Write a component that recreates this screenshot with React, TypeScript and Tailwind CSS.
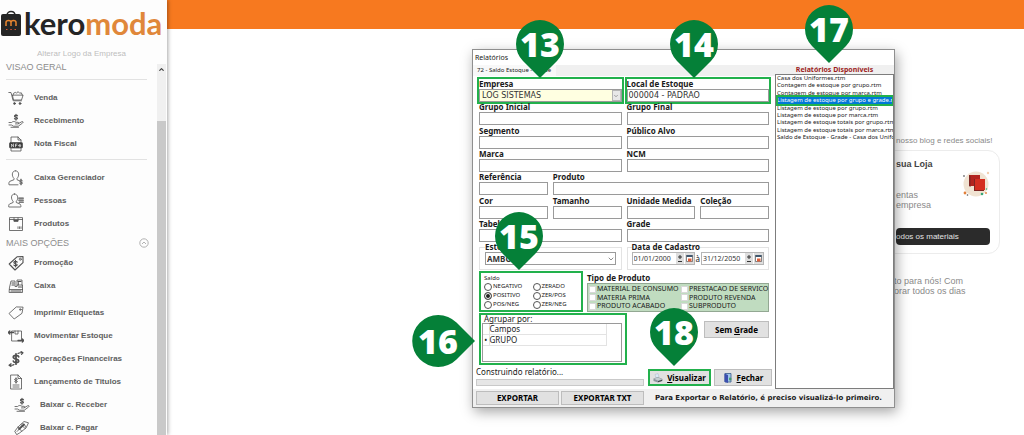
import type { ReactNode } from 'react';
import { ChevronDown, ChevronUp } from 'lucide-react';

const reports = [
  'Casa dos Uniformes.rtm',
  'Contagem de estoque por grupo.rtm',
  'Contagem de estoque por marca.rtm',
  'Listagem de estoque por grupo e grade.rtm',
  'Listagem de estoque por grupo.rtm',
  'Listagem de estoque por marca.rtm',
  'Listagem de estoque totais por grupo.rtm',
  'Listagem de estoque totais por marca.rtm',
  'Saldo de Estoque - Grade - Casa dos Uniformes.rtm',
];

const balances = ['NEGATIVO', 'ZERADO', 'POSITIVO', 'ZER/POS', 'POS/NEG', 'ZER/NEG'];

const productTypes = [
  'MATERIAL DE CONSUMO',
  'PRESTACAO DE SERVICO',
  'MATERIA PRIMA',
  'PRODUTO REVENDA',
  'PRODUTO ACABADO',
  'SUBPRODUTO',
];

function Icon({ children }: { children: ReactNode }) {
  return (
    <svg
      viewBox="0 0 16 16"
      className="w-4 h-4 shrink-0"
      fill="none"
      stroke="#505050"
      strokeWidth="0.8"
      strokeLinecap="round"
      strokeLinejoin="round"
    >
      {children}
    </svg>
  );
}

function Dollar({ x = 8, y = 8, s = 1 }: { x?: number; y?: number; s?: number }) {
  return (
    <path
      transform={`translate(${x} ${y}) scale(${s})`}
      d="M2-1.6C1.6-3-2-3-2-1.3S2-.2 2 1.4-1.7 3-2 1.6M0-3.8v7.6"
      strokeWidth="1.3"
    />
  );
}

function Hand() {
  return (
    <path d="M1 9.5h2.5c1.500-1.400 3-1.200 4.500-.2h2c1.200 0 1 1.600-.2 1.600H7.500M10.500 10.600l3.300-1.900c1.200-.5 1.800.6.8 1.300l-4.300 3.200H5.500L3.500 12H1M3 14.300h7.500" />
  );
}

const icons: Record<string, ReactNode> = {
  cart: (
    <>
      <path d="M.8 2.500h2.200l2.200 8.300h8.300M4.500 5.500 5.500 10h8l1.500-4.500ZM5 5.300l.5-2 2-1 1 1 1.500-1.700 1.600 1.600 1.700-.4 1 2.300" />
      <circle cx="6.500" cy="13.500" r="0.900" fill="#505050" />
      <circle cx="12" cy="13.500" r="0.900" fill="#505050" />
    </>
  ),
  hand: (
    <>
      <Dollar x={8} y={4.200} s={0.8} />
      <Hand />
    </>
  ),
  nfe: (
    <>
      <path d="M3 6V1h7l3 3v2M10 1v3h3M3 12.500V15h10v-2.500" />
      <rect x="1.500" y="6.500" width="13" height="5.500" rx="1" fill="#3b3b3b" />
      <path d="M3.500 10.800V8l2 2.800V8M7.500 10.800V8h1.500M7.500 9.300h1.300M10.800 9.500h2c0-1.500-2-1.400-2 .2 0 1.200 1.400 1.400 2 .7" stroke="#fff" strokeWidth="0.6" />
    </>
  ),
  manager: (
    <>
      <path d="M7.500.8c-4.200 0-3.800 5.600-1.500 7.600v1.300L1.700 11.400c-.9.600-1 3.100-.7 3.400h9M7.500.8c4.200 0 3.800 5.600 1.500 7.600v1.300l2 .9" />
      <Dollar x={13} y={12} s={0.75} />
    </>
  ),
  people: (
    <>
      <path d="M6.500 1c-4 0-3.600 5.300-1.400 7.200v1.300L1.500 11c-.9.600-1 2.700-.7 3h12c.3-.3 0-2.400-.8-3L8.300 9.500V8.200C10.500 6.300 10.500 1 6.500 1Z" />
      <path d="M10.800 5.200h4.500M10.800 7.200h4.500M11.300 9.200h4" strokeWidth="1.200" />
    </>
  ),
  box: (
    <>
      <path d="M1.500 2v12.500h13V2ZM1.500 3.500h13M6 2v3.300h4V2" />
      <path d="M6.300 4.800h3.400" strokeWidth="1.400" />
      <path d="M10 12.500V10.800M11.500 12.500V10.800M13 12.500V10.800" />
    </>
  ),
  promo: (
    <>
      <path d="M15 1.500v6.200L7 15 1.200 9 9 1.800Z" strokeWidth="1.100" />
      <circle cx="12.300" cy="4.200" r="1" />
      <Dollar x={7.500} y={8.600} s={0.85} />
    </>
  ),
  register: (
    <>
      <path d="M1.500 9.500 3 3h4v5.500h2V7h5.500v7.500h-13ZM1.500 11.500h13M9 7V2h5v5M10.500 7V4.500" />
      <path d="M4 5h2M4 7h2M10 3.500h3M3 13h10M10.500 9h3" strokeWidth="1.200" />
    </>
  ),
  tag: (
    <>
      <path d="M15 2.500 14 8.300 6.200 14 1 8.500 8 2.200Z" />
      <circle cx="12.300" cy="4.500" r="0.800" />
    </>
  ),
  move: (
    <>
      <path d="M4 3h9.500v10H4ZM7 3v3h3V3" />
      <path d="M5.500 4.500H0M1.800 3 .2 4.500 1.800 6M10 12.500h6M14.300 11l1.500 1.500-1.500 1.500" strokeWidth="1.300" />
    </>
  ),
  exchange: (
    <>
      <Dollar x={8} y={8} s={1.35} />
      <path d="M10 2.500c1.500-1.300 3-.7 4.500-.7M13 .5l2 1.300-1.500 1.600M6 13.500c-1.500 1.300-3 .7-4.500.7M3 12.700l-2 1.500 2 1.300" strokeWidth="1.100" />
    </>
  ),
  document: (
    <>
      <path d="M3 1h7l3.500 3.500V15H3ZM10 1v3.500h3.500M5 11h6M5 13h6" />
      <Dollar x={8} y={6.500} s={0.7} />
    </>
  ),
  pay: (
    <>
      <path d="m1 11 3-4 6-5.500 4.500 1.300L12 8l-6.500 5L3 14.500ZM4 7l3.500 4M7 4.500l4 4M3 11.500l6-6M8 3.700c2 0 3.500 1.400 3.500 3.300" />
      <path d="m5 9 5-4.500" strokeWidth="1.800" />
    </>
  ),
};

interface MenuItemProps {
  icon: string;
  label: string;
  nested?: boolean;
}

function MenuItem({ icon, label, nested }: MenuItemProps) {
  return (
    <li>
      <a href="#" className={`flex items-center h-[23px] gap-[10px] ${nested ? 'pl-[14px]' : 'pl-2'}`}>
        <Icon>{icons[icon]}</Icon>
        <span className="font-bold whitespace-nowrap text-[#606060]">{label}</span>
      </a>
    </li>
  );
}

function Sidebar() {
  return (
    <aside className="relative z-10 w-[167px] shrink-0 h-full flex flex-col bg-[#fdfdfd] shadow-[1px_0_4px_rgba(0,0,0,0.35)]">
      <div className="flex items-center h-[45px] pl-px">
        <svg viewBox="0 0 20 26" className="w-5 h-[26px] shrink-0">
          <path d="M6 5.500C6 .2 14 .2 14 5.500" fill="none" stroke="#252525" strokeWidth="1.500" />
          <rect y="4" width="20" height="22" rx="2" fill="#252525" />
          <path d="M5 16v-3.500c0-2.700 5-2.700 5 0V16v-3.500c0-2.700 5-2.700 5 0V16" fill="none" stroke="#e8852f" strokeWidth="1.500" />
          <path d="M5 19.500h1.500M9.300 19.500h1.500M13.500 19.500H15" stroke="#d9542f" />
        </svg>
        <span className="pl-[3px] font-['Lato'] font-bold text-[31px] leading-10 text-[#252525]">
          kero<span className="text-[#e0873a]">moda</span>
        </span>
      </div>
      <p className="h-[19px] pr-1 text-center text-[8px] leading-[18px] text-[#bdbdbd]">Alterar Logo da Empresa</p>
      <div className="flex flex-1 min-h-0">
        <nav className="flex-1 overflow-hidden text-[8px]">
          <h2 className="-mt-[2px] pl-[6px] text-[9px] leading-[10px] text-[#8c8c8c]">VISÃO GERAL</h2>
          <hr className="mt-[7px] ml-[6px] mr-[10px] mb-[6px] border-[#e2e2e2]" />
          <ul>
            <MenuItem icon="cart" label="Venda" />
            <MenuItem icon="hand" label="Recebimento" />
            <MenuItem icon="nfe" label="Nota Fiscal" />
          </ul>
          <hr className="mt-1 ml-[6px] mr-[10px] mb-[6px] border-[#e2e2e2]" />
          <ul>
            <MenuItem icon="manager" label="Caixa Gerenciador" />
            <MenuItem icon="people" label="Pessoas" />
            <MenuItem icon="box" label="Produtos" />
          </ul>
          <div className="flex items-center justify-between h-4 pl-[6px] pr-2">
            <h2 className="text-[9px] leading-4 text-[#8c8c8c]">MAIS OPÇÕES</h2>
            <svg viewBox="0 0 10 10" className="w-[10px] h-[10px]" fill="none" stroke="#a0a0a0" strokeWidth="0.8">
              <circle cx="5" cy="5" r="4.200" />
              <path d="m3 6 2-2 2 2" />
            </svg>
          </div>
          <ul>
            <MenuItem icon="promo" label="Promoção" />
            <MenuItem icon="register" label="Caixa" />
          </ul>
          <ul className="mt-1">
            <MenuItem icon="tag" label="Imprimir Etiquetas" />
            <MenuItem icon="move" label="Movimentar Estoque" />
            <MenuItem icon="exchange" label="Operações Financeiras" />
            <MenuItem icon="document" label="Lançamento de Titulos" />
            <MenuItem icon="hand" label="Baixar c. Receber" nested />
            <MenuItem icon="pay" label="Baixar c. Pagar" nested />
          </ul>
        </nav>
        <div className="w-[9px] mr-px flex flex-col bg-[#f0f0f0]">
          <div className="h-[57px] flex justify-center pt-[2px]">
            <ChevronUp size={7} color="#404040" strokeWidth={4} />
          </div>
          <div className="flex-1 bg-[#c9c9c9]" />
        </div>
      </div>
    </aside>
  );
}

function Promotions() {
  return (
    <section className="ml-auto w-[180px] pt-[107px] text-[9px] leading-[10px] text-[#8a8a8a]">
      <p className="pl-[52px] text-[8px] whitespace-nowrap">nosso blog e redes sociais!</p>
      <div className="mt-1 mr-6 h-[104px] rounded-xl border border-[#ececec] pl-[51px] pr-[9px]">
        <div className="flex justify-between">
          <div className="pt-2 whitespace-nowrap">
            <h3 className="font-bold text-[#444444]">sua Loja</h3>
            <p className="mt-[21px]">entas</p>
            <p>empresa</p>
          </div>
          <svg viewBox="0 0 28 28" className="w-7 h-7 mt-[18px]">
            <circle cx="14" cy="15" r="12.500" fill="#f0e3d2" />
            <path d="M7 6h11v11H7Z" fill="#b3231e" />
            <path d="M7 6v11l1.500 1V7M12 10h10v12H12Z" fill="#7e2522" />
            <path d="M13 10h10v11H13Z" fill="#d42e20" />
            <circle cx="2" cy="7" r="0.900" fill="#777" />
            <circle cx="26" cy="4" r="1.200" fill="#f3cfb0" />
            <circle cx="3" cy="24" r="1.400" fill="#e2803a" />
            <circle cx="5.500" cy="26" r="0.800" fill="#555" />
            <circle cx="20" cy="25" r="1.300" fill="#37a878" />
            <circle cx="24" cy="24" r="0.900" fill="#e2803a" />
            <circle cx="24.500" cy="20" r="0.800" fill="#37a878" />
          </svg>
        </div>
        <button type="button" className="block w-full h-[17px] mt-[18px] rounded-sm bg-[#2b2b2b] text-left text-[8px] text-[#e4e4e4] whitespace-nowrap">
          odos os materiais
        </button>
      </div>
      <p className="mt-[22px] pl-[50px] whitespace-nowrap">to para nós! Com</p>
      <p className="pl-[50px] whitespace-nowrap">orar todos os dias</p>
    </section>
  );
}

interface FieldProps {
  id: string;
  label: string;
  wide?: 2 | 3;
  value?: string;
  marked?: boolean;
}

function Field({ id, label, wide, value, marked }: FieldProps) {
  const span = wide === 3 ? 'col-span-3' : wide === 2 ? 'col-span-2' : '';
  return (
    <div className={`flex flex-col ${span} ${marked ? 'outline-2 outline-[#22b14c]' : ''}`}>
      <label htmlFor={id} className="h-[10px] font-bold text-[8px] leading-[10px] whitespace-nowrap">
        {label}
      </label>
      <input
        id={id}
        defaultValue={value}
        className="w-full min-w-0 h-[13px] border border-[#9a9a9a] bg-white px-px text-[8px] font-['DejaVu_Sans'] text-[#333333]"
      />
    </div>
  );
}

function DateField({ label, value }: { label: string; value: string }) {
  return (
    <div className="flex items-center flex-1 min-w-0 h-[13px] border border-[#b5b5b5]">
      <input aria-label={label} defaultValue={value} className="flex-1 min-w-0 pl-px text-[7px] text-[#333333]" />
      <svg viewBox="0 0 18 11" className="w-[18px] h-[11px] shrink-0">
        <path d="M0 0h8v11H0ZM9 0h9v11H9Z" fill="#dedede" />
        <path d="M2 4h4M4 2v4M2 8.500h4" stroke="#333" />
        <path d="M10.500 2.500h6v6h-6Z" fill="#fff" stroke="#555" strokeWidth="0.700" />
        <path d="M10.500 2h6v2h-6Z" fill="#40586f" />
        <path d="M12 5.500h3.500v3H12Z" fill="#e0603a" />
      </svg>
    </div>
  );
}

const button =
  'flex items-center justify-center gap-1 border border-[#bdbdbd] bg-[#e1e1e1] font-bold text-[8px] leading-[10px] whitespace-nowrap text-black font-[\'DejaVu_Sans_Condensed\',\'DejaVu_Sans\']';

function ReportDialog() {
  return (
    <div
      role="dialog"
      aria-label="Relatórios"
      className="absolute z-20 left-[472px] top-[49px] w-[423px] border border-[#8f8f8f] bg-[#f0f0f0] text-[#1a1a1a] font-['Noto_Sans',sans-serif] shadow-[2px_4px_12px_rgba(0,0,0,0.35)]"
    >
      <div className="h-[15px] pl-[2px] bg-white text-[7px] leading-[15px]">Relatórios</div>
      <div className="flex">
        <div className="flex-1 min-w-0">
          <div className="flex h-[11px]">
            <div className="w-[83px] pl-1 bg-[#f8f8f8] text-[6px] leading-[11px] whitespace-nowrap">72 - Saldo Estoque - Grade</div>
          </div>
          <form className="px-[6px] pt-[3px] bg-white">
            <div className="grid grid-cols-4 gap-x-[5px] h-[163px] content-between">
              <div className="col-span-2 flex flex-col outline-2 outline-[#22b14c]">
                <label htmlFor="empresa" className="h-[10px] font-bold text-[8px] leading-[10px]">Empresa</label>
                <div className="relative">
                  <select
                    id="empresa"
                    className="block w-full h-[13px] appearance-none border border-[#9a9a9a] bg-[#ffffe1] pl-[2px] text-[8px] leading-[11px] font-['DejaVu_Sans'] text-[#333333]"
                  >
                    <option>LOG SISTEMAS</option>
                  </select>
                  <span className="absolute right-px top-px w-[9px] h-[11px] flex items-center justify-center border border-[#b5b5b5] bg-[#e8e8e8] pointer-events-none">
                    <ChevronDown size={6} color="#555555" />
                  </span>
                </div>
              </div>
              <Field id="local" label="Local de Estoque" wide={2} value="000004 - PADRAO" marked />
              <Field id="grupo-inicial" label="Grupo Inicial" wide={2} />
              <Field id="grupo-final" label="Grupo Final" wide={2} />
              <Field id="segmento" label="Segmento" wide={2} />
              <Field id="publico" label="Público Alvo" wide={2} />
              <Field id="marca" label="Marca" wide={2} />
              <Field id="ncm" label="NCM" wide={2} />
              <Field id="referencia" label="Referência" />
              <Field id="produto" label="Produto" wide={3} />
              <Field id="cor" label="Cor" />
              <Field id="tamanho" label="Tamanho" />
              <Field id="unidade" label="Unidade Medida" />
              <Field id="colecao" label="Coleção" />
              <Field id="tabela" label="Tabela" wide={2} />
              <Field id="grade" label="Grade" wide={2} />
            </div>

            <div className="grid grid-cols-2 gap-[5px] h-[29px]">
              <fieldset className="min-w-0 h-7 border border-[#e3e3e3] px-[5px]">
                <legend className="h-[10px] font-bold text-[8px] leading-[10px]">
                  <label htmlFor="estoque">Estoque</label>
                </legend>
                <div className="relative">
                  <select
                    id="estoque"
                    className="block w-full h-[13px] appearance-none border border-[#9a9a9a] bg-white pl-px font-bold text-[8px] leading-[11px] text-[#333333]"
                  >
                    <option>AMBOS</option>
                  </select>
                  <ChevronDown size={8} color="#555555" className="absolute right-px top-[3px] pointer-events-none" />
                </div>
              </fieldset>
              <fieldset className="min-w-0 h-7 border border-[#e3e3e3] px-1">
                <legend className="h-[10px] font-bold text-[8px] leading-[10px]">Data de Cadastro</legend>
                <div className="flex items-center gap-px text-[8px] leading-[10px]">
                  <DateField label="Data inicial" value="01/01/2000" />
                  <span>à</span>
                  <DateField label="Data final" value="31/12/2050" />
                </div>
              </fieldset>
            </div>

            <div className="flex gap-1">
              <fieldset className="w-[104px] h-[41px] border-2 border-[#22b14c] pl-[3px] pt-px">
                <span className="block text-[6px] leading-[8px]">Saldo</span>
                <div className="grid grid-cols-2">
                  {balances.map(b => (
                    <label key={b} className="flex items-center gap-px h-[9px] text-[6px] leading-[9px] whitespace-nowrap">
                      <input
                        type="radio"
                        name="saldo"
                        defaultChecked={b === 'POSITIVO'}
                        className="w-2 h-2 shrink-0 appearance-none rounded-full border border-[#555555] bg-white checked:bg-[#222222] checked:shadow-[inset_0_0_0_1px_#fff]"
                      />
                      {b}
                    </label>
                  ))}
                </div>
              </fieldset>
              <fieldset className="flex-1 min-w-0">
                <span className="block h-3 pt-[2px] font-bold text-[8px] leading-[10px]">Tipo de Produto</span>
                <div className="grid grid-cols-[92px_1fr] h-[29px] border border-[#93a893] bg-[#c0dcc0] pt-px px-px">
                  {productTypes.map(t => (
                    <label key={t} className="flex items-center gap-px h-2 text-[7px] leading-[8px] whitespace-nowrap">
                      <input type="checkbox" className="w-[7px] h-[7px] shrink-0 appearance-none border border-[#d8d8d8] bg-white" />
                      {t}
                    </label>
                  ))}
                </div>
              </fieldset>
            </div>

            <div className="flex justify-between mt-px">
              <div className="w-[148px] h-[52px] border-2 border-[#22b14c] pr-[3px] pl-px">
                <p className="pl-[2px] text-[8px] leading-[8px]">Agrupar por:</p>
                <div className="h-[39px] border border-[#9a9a9a] bg-white">
                  <table className="w-[124px] text-[8px] leading-[10px] border-r border-[#e3e3e3]">
                    <thead>
                      <tr className="border-b border-[#e3e3e3]">
                        <th className="w-[6px]" />
                        <th className="text-left font-normal border-l border-[#e3e3e3]">Campos</th>
                      </tr>
                    </thead>
                    <tbody>
                      <tr className="border-b border-[#e3e3e3]">
                        <td className="text-center">•</td>
                        <td className="border-l border-[#e3e3e3]">GRUPO</td>
                      </tr>
                    </tbody>
                  </table>
                </div>
              </div>
              <button type="button" className={`${button} w-[65px] h-[17px] mt-2`}>
                <span>Sem <u>G</u>rade</span>
              </button>
            </div>
          </form>
          <div className="flex items-start h-6 px-[3px] pt-1 bg-white">
            <div className="w-[168px]">
              <p className="text-[8px] leading-[10px] -mt-[2px] mb-[2px]">Construindo relatório...</p>
              <div className="h-[7px] border border-[#c9c9c9] bg-[#e6e6e6]" />
            </div>
            <button type="button" className={`${button} ml-1 w-[63px] h-[17px] outline-2 -outline-offset-2 outline-[#22b14c]`}>
              <svg viewBox="0 0 10 10" className="w-[10px] h-[10px]">
                <path d="M2 1.500 5 .5 6 4 3 5Z" fill="#dbe9f5" stroke="#a9b9c6" strokeWidth="0.500" />
                <path d="M.5 5.500 5 4l4.500 2v2L5 9.500.5 8Z" fill="#8b959d" />
                <path d="M1 5.800 5 4.500l4 1.700-4 1.500Z" fill="#c5cdd2" />
                <path d="m5 8.700 4-1.300" stroke="#444" />
              </svg>
              <span><u>V</u>isualizar</span>
            </button>
            <button type="button" className={`${button} ml-[3px] w-[58px] h-[17px]`}>
              <svg viewBox="0 0 10 10" className="w-[10px] h-[10px]">
                <path d="M2 .500h6v8.500H2Z" fill="#9fc6ea" stroke="#3a5a8c" strokeWidth="0.800" />
                <path d="M1.500.5 5 2v8L1.500 8.700Z" fill="#3c4fae" />
                <path d="M6 6h2.500M7 4.500v3" stroke="#2d9b4c" />
              </svg>
              <span><u>F</u>echar</span>
            </button>
          </div>
        </div>

        <div className="w-[119px] flex flex-col">
          <h2 className="h-[9px] text-center font-bold text-[7px] leading-[9px] text-[#9c1c1c]">Relatórios Disponíveis</h2>
          <div className="flex-1 overflow-hidden border border-[#7d7d7d] bg-white">
            <ul className="flex flex-col justify-between h-[66px] pl-px text-[6px] leading-[7px] whitespace-nowrap">
              {reports.map((r, i) => (
                <li
                  key={r}
                  className={i === 3 ? 'h-[9px] leading-[9px] -my-px bg-[#0078d7] text-white outline-2 -outline-offset-1 outline-[#22b14c]' : 'h-[7px]'}
                >
                  {r}
                </li>
              ))}
            </ul>
          </div>
        </div>
      </div>
      <div className="flex items-center gap-[2px] h-[18px] px-[3px]">
        <button type="button" className={`${button} w-[83px] h-[14px]`}>EXPORTAR</button>
        <button type="button" className={`${button} w-[83px] h-[14px]`}>EXPORTAR TXT</button>
        <p className="flex-1 text-center font-bold text-[7px] leading-[10px] whitespace-nowrap font-['DejaVu_Sans']">
          Para Exportar o Relatório, é preciso visualizá-lo primeiro.
        </p>
      </div>
    </div>
  );
}

function Pin({ step, place }: { step: number; place: string }) {
  return (
    <div className={`absolute z-30 w-12 h-[58px] ${place}`}>
      <svg viewBox="0 0 48 58" className="absolute inset-0 w-full h-full">
        <path d="M24 58 7 41A24 24 0 1 1 41 41Z" fill="#058038" />
      </svg>
      <span className="relative block h-12 text-center font-['Open_Sans'] font-extrabold text-[34px] leading-12 text-white">{step}</span>
    </div>
  );
}

export default function App() {
  return (
    <div className="relative flex h-screen overflow-hidden bg-white font-['Liberation_Sans',Arial,sans-serif]">
      <Sidebar />
      <main className="flex-1 min-w-0 flex flex-col">
        <header className="h-[29px] shrink-0 bg-[#f7791f]" />
        <Promotions />
      </main>
      <ReportDialog />
      <Pin step={13} place="left-[516px] top-5" />
      <Pin step={14} place="left-[670px] top-5" />
      <Pin step={15} place="left-[495px] top-[212px]" />
      <Pin step={17} place="left-[805px] top-[5px]" />
      <Pin step={18} place="left-[650px] top-[308px]" />
      <div className="absolute z-30 left-[412px] top-[315px] w-[63px] h-[52px]">
        <svg viewBox="0 0 63 52" className="absolute inset-0 w-full h-full">
          <path d="M63 26 44.500 44.500A26 26 0 1 1 44.500 7.500Z" fill="#058038" />
        </svg>
        <span className="relative block w-[52px] text-center font-['Open_Sans'] font-extrabold text-[34px] leading-[52px] text-white">16</span>
      </div>
    </div>
  );
}
